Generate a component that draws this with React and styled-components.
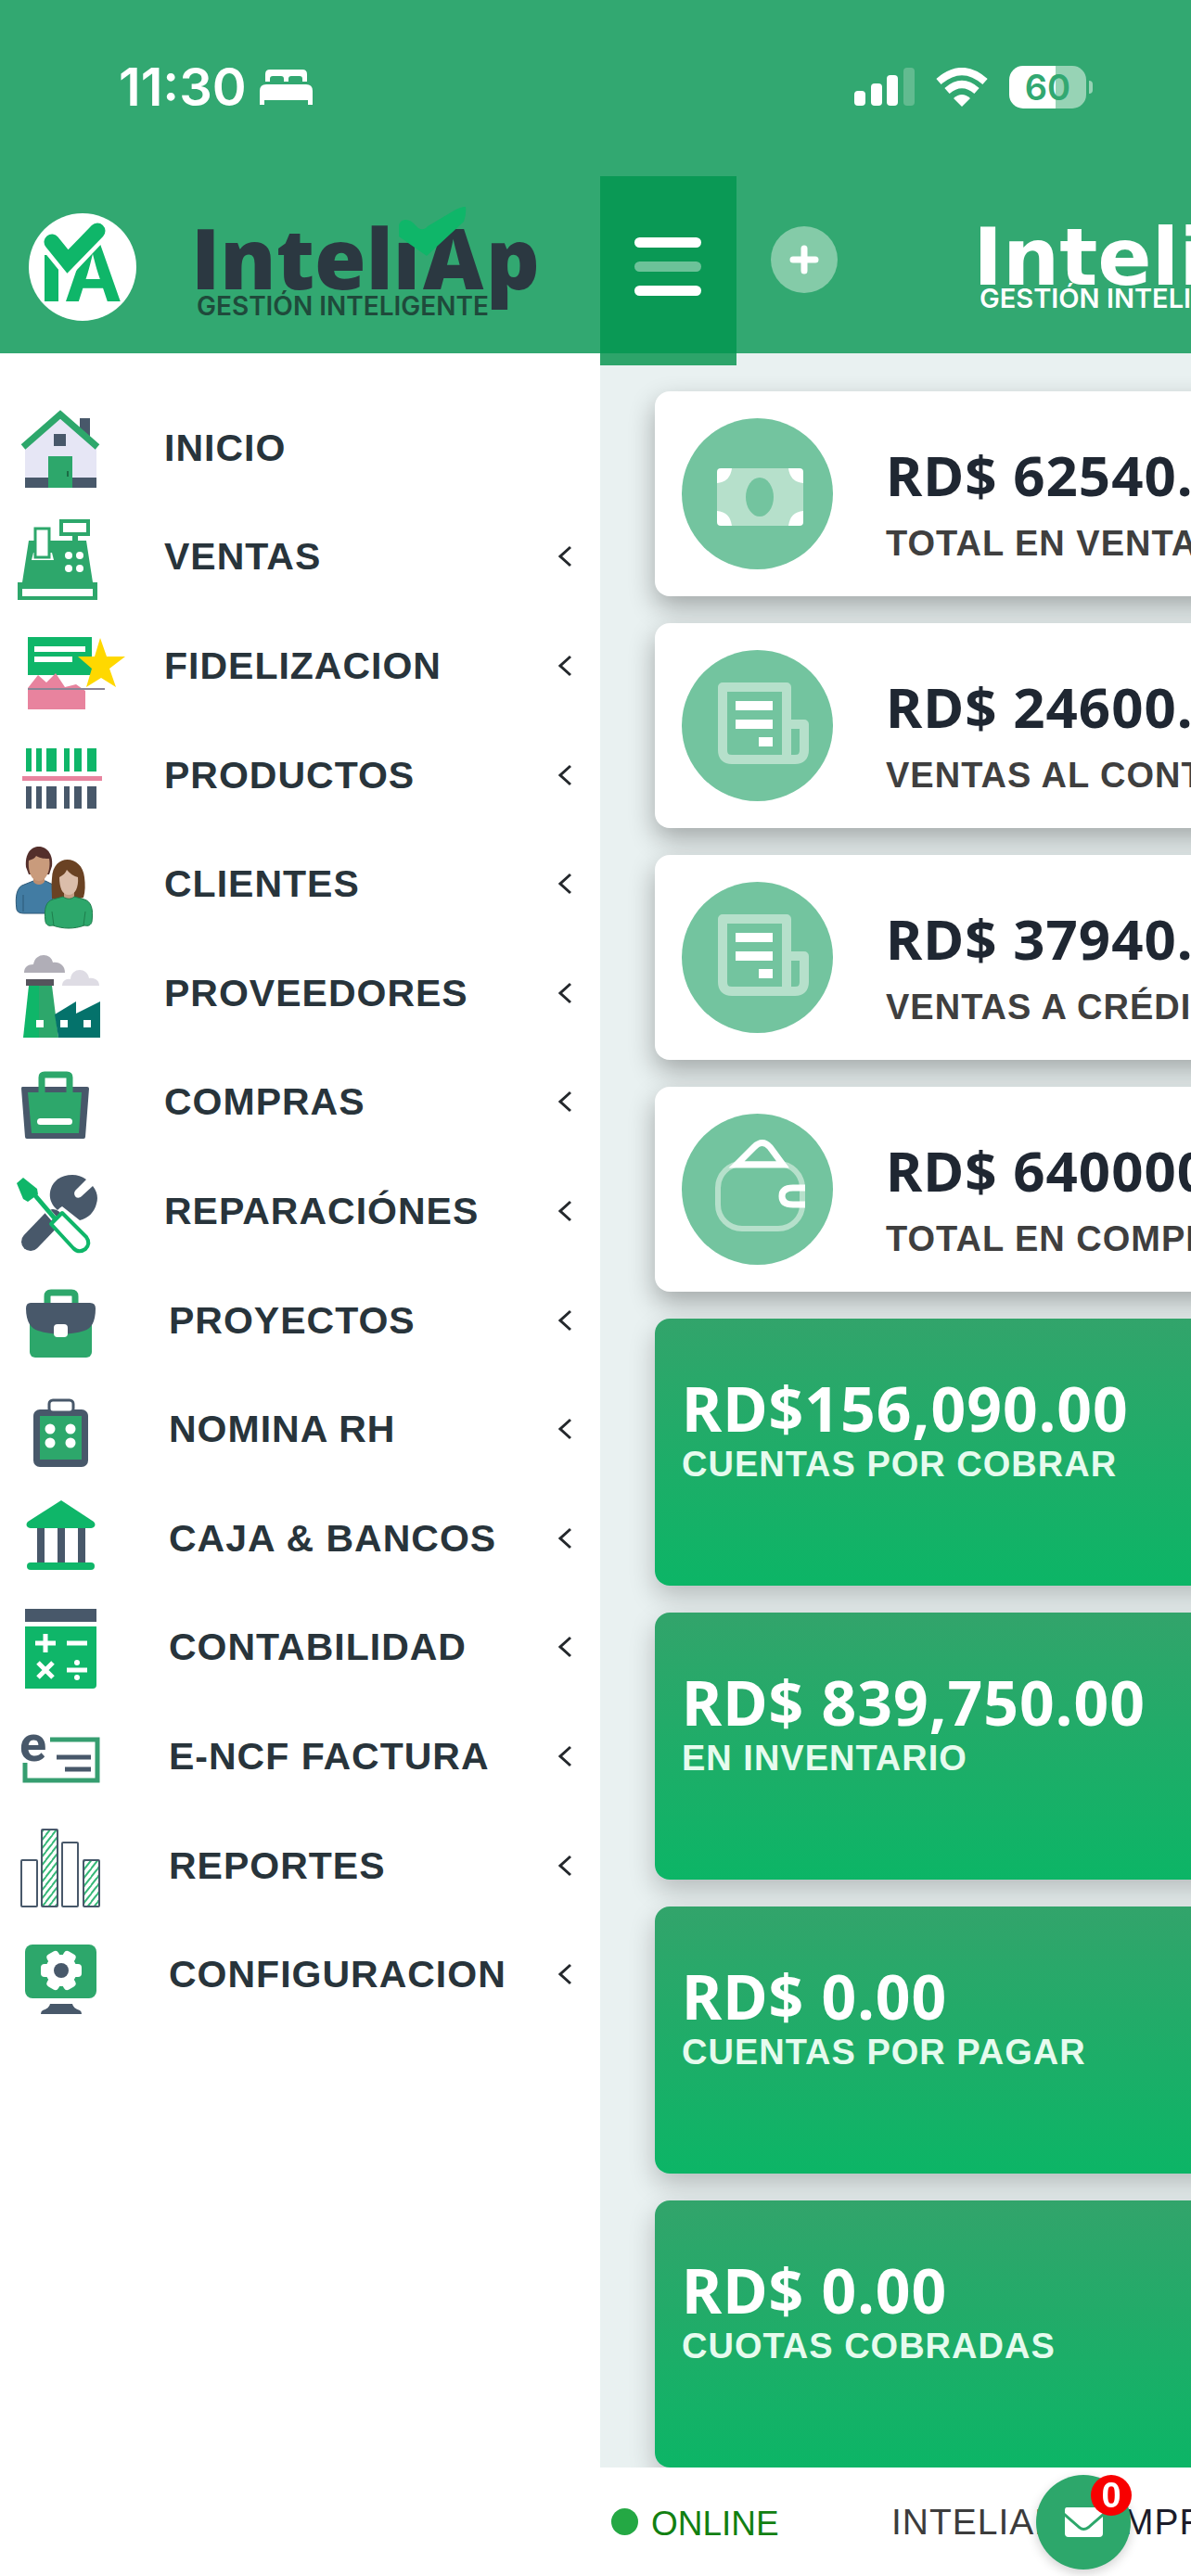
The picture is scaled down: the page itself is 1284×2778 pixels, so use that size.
import React from 'react';
import styled, { createGlobalStyle } from 'styled-components';

const c = {
  header: '#32a871',
  deep: '#0a9955',
  green: '#2da76b',
  bright: '#0fb669',
  slate: '#48586a',
  ink: '#28343b',
};

const sans = '"Liberation Sans", Arial, sans-serif';
const numeric = '"Noto Sans", "Open Sans", sans-serif';
const brandFont = 'Inter, "Open Sans", sans-serif';
const logoFont = '"Open Sans", "Noto Sans", sans-serif';
const wideLogoFont = '"DejaVu Sans", "Open Sans", sans-serif';

const GlobalStyle = createGlobalStyle`
  *, *::before, *::after { box-sizing: border-box; }
  html, body { margin: 0; background: #fff; }
  body { font-family: ${sans}; overflow-x: hidden; }
  button { border: 0; padding: 0; background: none; font: inherit; color: inherit; cursor: pointer; }
  svg { display: block; flex: none; }
`;

const Page = styled.div`
  min-height: 100vh;
  display: flex;
  flex-direction: column;
  overflow: hidden;
`;

const StatusBar = styled.div`
  height: 190px;
  padding: 0 106px 3px 128px;
  display: flex;
  align-items: center;
  justify-content: space-between;
  background: ${c.header};
  color: #fff;
`;

const StatusGroup = styled.div`
  display: flex;
  align-items: center;
  gap: ${(p) => p.$gap}px;
`;

const Clock = styled.time`
  font: 600 56px/60px ${brandFont};
`;

const Battery = styled.span`
  width: 83px;
  height: 46px;
  border-radius: 15px;
  background: linear-gradient(90deg, #fff 60%, #97d3b5 60%);
  color: ${c.header};
  font: 600 38px/46px ${brandFont};
  text-align: center;
`;

const BatteryGroup = styled.div`
  display: flex;
  align-items: center;
  gap: 3px;
`;

const BatteryCap = styled.span`
  width: 4px;
  height: 14px;
  border-radius: 0 4px 4px 0;
  background: #97d3b5;
`;

const Shell = styled.div`
  flex: 1;
  display: flex;
`;

const Sidebar = styled.aside`
  flex: none;
  width: 647px;
  background: #fff;
`;

const Brand = styled.a`
  height: 191px;
  display: flex;
  align-items: center;
  gap: 66px;
  padding: 4px 0 0 31px;
  background: ${c.header};
`;

const Menu = styled.nav`
  margin-top: 43px;
  min-height: 1764px;
  display: grid;
  grid-auto-rows: 1fr;
`;

const MenuItem = styled.button`
  width: 100%;
  display: grid;
  grid-template-columns: ${(p) => (p.$wide ? 182 : 177)}px 1fr auto;
  align-items: center;
  padding-right: 31px;
  color: ${c.ink};
  font: 700 41px/48px ${sans};
  letter-spacing: 1px;
  text-align: left;
  text-decoration: none;
  white-space: nowrap;
`;

const Content = styled.div`
  flex: none;
  width: 100vw;
  display: flex;
  flex-direction: column;
  background: #e9f1f1;
`;

const TopBar = styled.header`
  height: 191px;
  display: flex;
  align-items: flex-start;
  background: ${c.header};
`;

const Toggle = styled.button`
  width: 147px;
  height: 204px;
  display: flex;
  flex-direction: column;
  align-items: center;
  justify-content: center;
  gap: 15px;
  padding: 0 2px 10px 0;
  background: linear-gradient(${c.deep} 191px, #2da46a 191px);
`;

const ToggleLine = styled.span`
  width: 72px;
  height: 11px;
  border-radius: 6px;
  background: ${(p) => (p.$dim ? '#6cc299' : '#fff')};
`;

const AddButton = styled.button`
  width: 72px;
  height: 72px;
  margin: 54px 154px 0 37px;
  display: grid;
  place-items: center;
  border-radius: 50%;
  background: #84cba8;
`;

const TopLogo = styled.a`
  margin-top: 44px;
`;

const Cards = styled.main`
  display: flex;
  flex-direction: column;
  gap: 29px;
  padding: 41px 59px 0;
`;

const StatCard = styled.section`
  height: 221px;
  padding: 29px;
  display: flex;
  align-items: flex-end;
  gap: 57px;
  border-radius: 16px;
  background: #fff;
  box-shadow: 0 12px 28px rgba(0, 0, 0, 0.3);
`;

const StatText = styled.div`
  display: flex;
  flex-direction: column;
  gap: 6px;
`;

const StatValue = styled.strong`
  color: #1f2732;
  font: 700 60px/80px ${numeric};
  letter-spacing: 1px;
`;

const StatLabel = styled.span`
  color: #3f3f3f;
  font: 700 38px/56px ${sans};
  letter-spacing: 1px;
`;

const TotalCard = styled.section`
  height: 288px;
  padding: 64px 29px 0;
  display: flex;
  flex-direction: column;
  border-radius: 16px;
  background: linear-gradient(#32a46b, #0cb566);
  box-shadow: 0 12px 28px rgba(0, 0, 0, 0.22);
  color: #fff;
`;

const TotalValue = styled.strong`
  font: 700 66px/64px ${numeric};
  letter-spacing: 1px;
`;

const TotalLabel = styled.span`
  color: #e6fbee;
  font: 700 38px/58px ${sans};
  letter-spacing: 1px;
`;

const Footer = styled.footer`
  flex: 1;
  min-height: 117px;
  display: flex;
  align-items: center;
  padding-left: 12px;
  background: #fff;
  white-space: nowrap;
`;

const Dot = styled.span`
  width: 29px;
  height: 29px;
  margin-right: 14px;
  border-radius: 50%;
  background: #24a844;
`;

const Online = styled.span`
  width: 259px;
  padding-top: 4px;
  color: #128012;
  font: 400 37px/44px ${sans};
`;

const Company = styled.span`
  width: 223px;
  color: #3c3c3c;
  font: 400 39px/44px ${sans};
  letter-spacing: 1px;
`;

const CompanyName = styled(Company)`
  width: auto;
  color: #1c1c2a;
`;

const MailButton = styled.button`
  position: fixed;
  right: 65px;
  bottom: 7px;
  width: 102px;
  height: 102px;
  display: grid;
  place-items: center;
  border-radius: 50%;
  background: ${c.green};
  box-shadow: 0 4px 12px rgba(0, 0, 0, 0.18);
`;

const Badge = styled.span`
  position: absolute;
  top: 0;
  right: -1px;
  width: 44px;
  height: 44px;
  border-radius: 50%;
  background: #f80000;
  color: #fff;
  font: 700 38px/44px ${sans};
  text-align: center;
`;

function Icon({ children }) {
  return (
    <svg width="140" height="100" viewBox="0 0 140 100" fill="none" aria-hidden="true">
      {children}
    </svg>
  );
}

const HomeIcon = () => (
  <Icon>
    <path d="M86 18h11v32H86z" fill={c.slate} />
    <path d="M27 46 65 12l39 34v40H27z" fill="#e6e6f5" />
    <path d="M27 82h77v11H27z" fill={c.slate} />
    <path d="M25 49 65 14l40 35" stroke={c.green} strokeWidth="7" />
    <path d="M58 35h13v13H58z" fill={c.slate} />
    <path d="M52 59h26v34H52z" fill={c.green} />
    <path d="M73 75v6" stroke="#1b6b44" strokeWidth="2" />
  </Icon>
);

const RegisterIcon = () => (
  <Icon>
    <path d="M78 26h6v9h-6z" fill={c.green} />
    <path d="M66 12h29v14H66z" fill="#fff" stroke={c.green} strokeWidth="4" />
    <path d="M31 33h62l7 45h5v19H19V78h5z" fill={c.green} />
    <path d="m36 46-2 8h24l-2-8z" fill="#fff" />
    <path d="M38 20h15v31H38z" fill="#fff" stroke={c.green} strokeWidth="3" />
    <path d="M24 85h76v8H24z" fill="#fff" />
    {[74, 86].map((x) => [49, 63].map((y) => <circle key={`${x}-${y}`} cx={x} cy={y} r="4" fill="#fff" />))}
  </Icon>
);

const LoyaltyIcon = () => (
  <Icon>
    <path d="M30 19h69v41H30z" fill={c.bright} />
    <path d="M37 29h55v6H37zM37 40h41v6H37z" fill="#fff" />
    <path d="M30 74l11-14 9 8 10-10 10 15 12-3 10 7v20H30z" fill="#e8839e" />
    <path d="M30 75h83" stroke="#8b8496" strokeWidth="2" />
    <path d="m108 20 7 20h20l-17 13 7 20-16-10-16 10 6-20-15-13h18z" fill="#ffd800" />
  </Icon>
);

const bars = [[28, 6], [39, 6], [50, 11], [69, 6], [80, 8], [94, 10]];
const BarcodeIcon = () => (
  <Icon>
    {bars.map(([x, w]) => (
      <React.Fragment key={x}>
        <rect x={x} y="21" width={w} height="25" fill={c.bright} />
        <rect x={x} y="62" width={w} height="24" fill={c.slate} />
      </React.Fragment>
    ))}
    <path d="M24 51h86v5H24z" fill="#e8839e" />
  </Icon>
);

const PeopleIcon = () => (
  <Icon>
    <path d="M18 78c-2-14 0-25 8-27l10-4h13l8 4v31H26c-4 0-7-1-8-4z" fill="#427ca3" stroke="#2d5876" />
    <path d="M25 62v18" stroke="#2d5876" />
    <path d="M36 40h12v8c-3 4-9 4-12 0z" fill="#bd8e6f" />
    <path d="M28 32c-3-30 31-28 28-1l-3 9H31z" fill="#542f2b" />
    <path d="M31 25c4-1 7-3 8-5 5 3 10 3 14 3 2 10-2 24-11 24S30 35 31 25z" fill="#c99b7c" />
    <path d="M56 66c0-7-1-14 0-22 1-28 33-25 35-1 1 8 1 15-1 22-7 2-25 4-34 1z" fill="#6a4223" />
    <path d="M69 56h11v10c-3 3-8 3-11 0z" fill="#c69e86" />
    <path d="M64 43c4-2 7-5 8-8 3 4 8 7 12 8 1 11-3 19-10 19s-10-8-10-19z" fill="#dbbdaa" />
    <path d="M49 91c-2-15 1-22 8-24l11-3c4 3 9 3 12 0l11 3c7 2 10 10 8 24-1 4-4 5-8 4-11 4-23 4-34 0-4 1-7 0-8-4z" fill="#2da76b" stroke="#1e7d4c" />
    <path d="M56 80l2 15M92 80l-2 15" stroke="#1e7d4c" />
  </Icon>
);

const FactoryIcon = () => (
  <Icon>
    <path d="M26 28c0-6 4-9 10-9 2-13 19-13 21-2 7-1 13 3 13 11z" fill="#b0aeb7" />
    <path d="M67 42c0-5 4-8 9-7 1-13 18-13 20-1 7-1 11 3 11 8z" fill="#dedce4" />
    <path d="M28 35h30v7H28z" fill="#55545c" />
    <path d="M31 42h11v56H25z" fill={c.bright} />
    <path d="M42 42h14l7 56H42z" fill={c.green} />
    <path d="m59 73 23-14v13l26-13v39H63z" fill="#04726b" />
    <path d="M39 79h8v8h-8zM65 79h8v8h-8zM90 79h8v8h-8z" fill="#fff" />
  </Icon>
);

const BagIcon = () => (
  <Icon>
    <path d="M24 34h70q2 0 2 2l-4 52q0 2-2 2H29q-2 0-2-2l-4-52q0-2 1-2z" fill={c.slate} />
    <path d="M30 40h58l-3 44H34z" fill={c.green} />
    <path d="M45 42V24q0-3 3-3h24q3 0 3 3v18" stroke={c.green} strokeWidth="7" />
    <rect x="40" y="68" width="38" height="7" rx="3.5" fill="#fff" />
  </Icon>
);

const ToolsIcon = () => (
  <Icon>
    <path d="m57 58-24 25" stroke={c.slate} strokeWidth="20" strokeLinecap="round" />
    <path d="M93 16 82 27c-5 5 1 12 6 7l12-11c5 6 6 13 4 19-2 9-9 16-18 18L67 45q-2 1-5 4c-9-8-10-17-6-26 5-9 13-12 22-12q8 0 15 5z" fill={c.slate} />
    <path d="m40 37 18 21" stroke="#fff" strokeWidth="7" />
    <path d="m18 20 7-6 15 12 1 6-11 8-5-3z" fill={c.bright} />
    <path d="m36 31 23 27" stroke={c.bright} strokeWidth="5" />
    <path d="m55 64 12-12 26 26q5 7-1 13-7 5-13-1z" fill="#fff" stroke={c.bright} strokeWidth="4" strokeLinejoin="round" />
  </Icon>
);

const BriefcaseIcon = () => (
  <Icon>
    <path d="M51 34V24q0-4 4-4h22q4 0 4 4v10" stroke={c.green} strokeWidth="7" />
    <rect x="32" y="44" width="67" height="46" rx="6" fill={c.green} />
    <path d="M33 31h64q6 0 6 6c0 15-5 22-12 24-16 5-34 5-50 0-7-2-13-9-13-24q0-6 5-6z" fill={c.slate} />
    <rect x="58" y="54" width="15" height="14" rx="4" fill="#fff" />
  </Icon>
);

const PayrollIcon = () => (
  <Icon>
    <rect x="36" y="29" width="59" height="62" rx="7" fill={c.slate} />
    <path d="M43 36h45v47H43z" fill={c.green} />
    <rect x="53" y="19" width="26" height="13" rx="4" fill="#fff" stroke={c.slate} strokeWidth="3" />
    {[54, 76].map((x) => [50, 65].map((y) => <circle key={`${x}-${y}`} cx={x} cy={y} r="5.5" fill="#fff" />))}
  </Icon>
);

const BankIcon = () => (
  <Icon>
    <path d="M40 36h8v42h-8zM62 36h8v42h-8zM84 36h8v42h-8z" fill={c.slate} />
    <path d="m66 9 35 23c3 3 1 7-3 7H33c-4 0-6-4-3-7z" fill={c.bright} />
    <rect x="29" y="76" width="73" height="8" rx="4" fill={c.bright} />
  </Icon>
);

const CalculatorIcon = () => (
  <Icon>
    <path d="M27 9h77v14H27z" fill={c.slate} />
    <path d="M27 28h77v63q0 4-4 4H27z" fill={c.bright} />
    <path d="M38 46h22M49 36v20M72 46h22M41 67l16 16M57 67 41 83M72 75h22" stroke="#fff" strokeWidth="5" />
    <circle cx="83" cy="67" r="3" fill="#fff" />
    <circle cx="83" cy="83" r="3" fill="#fff" />
  </Icon>
);

const InvoiceIcon = () => (
  <Icon>
    <path d="M54 32h51v44H27V57" stroke="#369e70" strokeWidth="5" />
    <path d="M61 51h37M70 64h28" stroke={c.slate} strokeWidth="5" />
    <text x="21" y="55" fontFamily='Roboto, "Liberation Sans", sans-serif' fontWeight="700" fontSize="54" fill={c.slate}>e</text>
  </Icon>
);

const ReportIcon = () => (
  <Icon>
    <defs>
      <pattern id="hatch" width="7" height="9" patternUnits="userSpaceOnUse">
        <path d="M-2 11 9-3M-6 7 3-4M4 13 12 2" stroke="#35b877" strokeWidth="2" />
      </pattern>
    </defs>
    {[[23, 44], [45, 11], [67, 25], [90, 44]].map(([x, y], i) => (
      <rect key={x} x={x} y={y} width="17" height={94 - y} rx="1" fill={i % 2 ? 'url(#hatch)' : '#fff'} stroke={c.slate} strokeWidth="2" />
    ))}
  </Icon>
);

const SettingsIcon = () => (
  <Icon>
    <rect x="27" y="18" width="77" height="58" rx="8" fill={c.green} />
    {[0, 60, 120].map((a) => (
      <rect key={a} x="59" y="24" width="14" height="44" rx="4" fill="#fff" transform={`rotate(${a + 30} 66 46)`} />
    ))}
    <circle cx="66" cy="46" r="17" fill="#fff" />
    <circle cx="66" cy="46" r="8" fill={c.slate} />
    <path d="M54 82h24q1 5 8 7 2 1 2 4H44q0-3 2-4 7-2 8-7z" fill={c.slate} />
  </Icon>
);

const Chevron = () => (
  <svg width="14" height="24" viewBox="0 0 14 24" fill="none" aria-hidden="true">
    <path d="M13 2 2 12l11 10" stroke="#24282c" strokeWidth="3" />
  </svg>
);

const BedIcon = () => (
  <svg width="57" height="40" viewBox="0 0 57 40" fill="#fff" aria-hidden="true">
    <path d="M6 14V6q0-5 5-5h35q5 0 5 5v8h-5v-3q0-3-3-3h-9q-3 0-3 3v3h-5v-3q0-3-3-3h-9q-3 0-3 3v3z" />
    <path d="M0 39V24q0-7 7-7h43q7 0 7 7v15h-5v-5H5v5z" />
  </svg>
);

const SignalIcon = () => (
  <svg width="65" height="41" viewBox="0 0 65 41" fill="#fff" aria-hidden="true">
    <rect y="25" width="12" height="16" rx="4" />
    <rect x="18" y="17" width="12" height="24" rx="4" />
    <rect x="35" y="8" width="12" height="33" rx="4" />
    <rect x="53" width="12" height="41" rx="4" fill="#62bb90" />
  </svg>
);

const WifiIcon = () => (
  <svg width="56" height="42" viewBox="0 0 56 42" fill="none" aria-hidden="true">
    <path d="M3 15q25-22 50 0M12 25q16-14 32 0" stroke="#fff" strokeWidth="8" />
    <path d="M19 33q9-8 18 0l-9 9z" fill="#fff" />
  </svg>
);

const BrandMark = () => (
  <svg width="116" height="116" viewBox="0 0 116 116" aria-hidden="true">
    <circle cx="58" cy="58" r="58" fill="#fff" />
    <path d="M17 45h15v50H17z" fill={c.bright} />
    <text x="38" y="95" fontFamily={brandFont} fontWeight="700" fontSize="84" fill={c.bright}>A</text>
    <path d="m24 32 18 22 34-36" fill="none" stroke="#fff" strokeWidth="24" strokeLinecap="round" />
    <path d="m25 31 17 21 32-33" fill="none" stroke={c.bright} strokeWidth="17" strokeLinecap="round" />
  </svg>
);

const BrandLogo = () => (
  <svg width="400" height="130" viewBox="0 0 400 130" role="img" aria-label="InteliAp Gestión Inteligente">
    <g fontFamily={logoFont} fontWeight="800" fontSize="90" fill="#2b3841">
      <text x="-7" y="89">Intelı</text>
      <text x="243" y="89">A</text>
      <text x="311" y="89">p</text>
    </g>
    <path d="M217 20c2-8 12-8 18 0 4 5 9 6 13 1l27-16q8-5 14-5 1 8-2 16l-40 37-30-21z" fill={c.bright} />
    <text x="-1" y="117" fontFamily={brandFont} fontWeight="600" fontSize="28" fill="#1f4a3b">GESTIÓN INTELIGENTE</text>
  </svg>
);

const WhiteLogo = () => (
  <svg width="480" height="120" viewBox="0 0 480 120" role="img" aria-label="InteliAp Gestión Inteligente">
    <text x="-8" y="73" fontFamily={wideLogoFont} fontWeight="700" fontSize="86" fill="#fff">InteliAp</text>
    <text x="-1" y="98" fontFamily={brandFont} fontWeight="600" fontSize="29" fill="#fff">GESTIÓN INTELIGENTE</text>
  </svg>
);

function StatIcon({ kind }) {
  const soft = '#b6e0cb';
  return (
    <svg width="163" height="163" viewBox="0 0 163 163" fill="none" aria-hidden="true">
      <circle cx="81.5" cy="81.5" r="81.5" fill="#73c49f" />
      {kind === 'cash' && (
        <>
          <rect x="38" y="54" width="93" height="62" rx="4" fill="#fff" />
          <path d="M54 54h61q2 15 16 16v30q-14 1-16 16H54q-2-15-16-16V70q14-1 16-16z" fill={soft} />
          <ellipse cx="84" cy="85" rx="15" ry="21" fill="#73c49f" />
        </>
      )}
      {kind === 'doc' && (
        <>
          <path d="M113 118V40H44v68q0 10 10 10h68q10 0 10-10V80h-19" stroke={soft} strokeWidth="10" strokeLinejoin="round" />
          <path d="M58 55h40v10H58zM58 75h40v10H58zM83 94h15v10H83z" fill="#fff" />
        </>
      )}
      {kind === 'wallet' && (
        <>
          <rect x="39" y="54" width="91" height="70" rx="26" stroke={soft} strokeWidth="6" />
          <path d="M59 55h50L95 36q-8-9-17 0z" stroke="#fff" strokeWidth="7" />
          <path d="M133 80h-13q-12 0-12 9t12 9h13" stroke="#fff" strokeWidth="7" />
        </>
      )}
    </svg>
  );
}

const menu = [
  { label: 'INICIO', icon: HomeIcon, leaf: true },
  { label: 'VENTAS', icon: RegisterIcon },
  { label: 'FIDELIZACION', icon: LoyaltyIcon },
  { label: 'PRODUCTOS', icon: BarcodeIcon },
  { label: 'CLIENTES', icon: PeopleIcon },
  { label: 'PROVEEDORES', icon: FactoryIcon },
  { label: 'COMPRAS', icon: BagIcon },
  { label: 'REPARACIÓNES', icon: ToolsIcon },
  { label: 'PROYECTOS', icon: BriefcaseIcon, wide: true },
  { label: 'NOMINA RH', icon: PayrollIcon, wide: true },
  { label: 'CAJA & BANCOS', icon: BankIcon, wide: true },
  { label: 'CONTABILIDAD', icon: CalculatorIcon, wide: true },
  { label: 'E-NCF FACTURA', icon: InvoiceIcon, wide: true },
  { label: 'REPORTES', icon: ReportIcon, wide: true },
  { label: 'CONFIGURACION', icon: SettingsIcon, wide: true },
];

const stats = [
  { kind: 'cash', value: 'RD$ 62540.00', label: 'TOTAL EN VENTAS' },
  { kind: 'doc', value: 'RD$ 24600.00', label: 'VENTAS AL CONTADO' },
  { kind: 'doc', value: 'RD$ 37940.00', label: 'VENTAS A CRÉDITO' },
  { kind: 'wallet', value: 'RD$ 640000.00', label: 'TOTAL EN COMPRAS' },
];

const totals = [
  { value: 'RD$156,090.00', label: 'CUENTAS POR COBRAR' },
  { value: 'RD$ 839,750.00', label: 'EN INVENTARIO' },
  { value: 'RD$ 0.00', label: 'CUENTAS POR PAGAR' },
  { value: 'RD$ 0.00', label: 'CUOTAS COBRADAS' },
];

export default function App() {
  return (
    <Page>
      <GlobalStyle />
      <StatusBar>
        <StatusGroup $gap={14}>
          <Clock>11:30</Clock>
          <BedIcon />
        </StatusGroup>
        <StatusGroup $gap={23}>
          <SignalIcon />
          <WifiIcon />
          <BatteryGroup>
            <Battery>60</Battery>
            <BatteryCap />
          </BatteryGroup>
        </StatusGroup>
      </StatusBar>
      <Shell>
        <Sidebar>
          <Brand href="#inicio">
            <BrandMark />
            <BrandLogo />
          </Brand>
          <Menu>
            {menu.map(({ label, icon: Glyph, leaf, wide }) => (
              <MenuItem key={label} as={leaf ? 'a' : 'button'} href={leaf ? '#inicio' : undefined} $wide={wide}>
                <Glyph />
                <span>{label}</span>
                {!leaf && <Chevron />}
              </MenuItem>
            ))}
          </Menu>
        </Sidebar>
        <Content>
          <TopBar>
            <Toggle aria-label="Menú">
              <ToggleLine />
              <ToggleLine $dim />
              <ToggleLine />
            </Toggle>
            <AddButton aria-label="Agregar">
              <svg width="32" height="32" viewBox="0 0 32 32" aria-hidden="true">
                <path d="M16 4v24M4 16h24" stroke="#fff" strokeWidth="7" strokeLinecap="round" />
              </svg>
            </AddButton>
            <TopLogo href="#inicio">
              <WhiteLogo />
            </TopLogo>
          </TopBar>
          <Cards>
            {stats.map((s) => (
              <StatCard key={s.label}>
                <StatIcon kind={s.kind} />
                <StatText>
                  <StatValue>{s.value}</StatValue>
                  <StatLabel>{s.label}</StatLabel>
                </StatText>
              </StatCard>
            ))}
            {totals.map((t) => (
              <TotalCard key={t.label}>
                <TotalValue>{t.value}</TotalValue>
                <TotalLabel>{t.label}</TotalLabel>
              </TotalCard>
            ))}
          </Cards>
          <Footer>
            <Dot />
            <Online>ONLINE</Online>
            <Company>INTELIAP</Company>
            <CompanyName>EMPRESA</CompanyName>
          </Footer>
        </Content>
      </Shell>
      <MailButton aria-label="Mensajes">
        <svg width="41" height="32" viewBox="0 0 41 32" aria-hidden="true">
          <path d="M2 0h37q2 0 2 3v3L25 20q-5 4-9 0L0 6V3q0-3 2-3z" fill="#fff" />
          <path d="M0 10l15 13q5 4 11 0l15-13v18q0 4-4 4H4q-4 0-4-4z" fill="#fff" />
        </svg>
        <Badge>0</Badge>
      </MailButton>
    </Page>
  );
}
